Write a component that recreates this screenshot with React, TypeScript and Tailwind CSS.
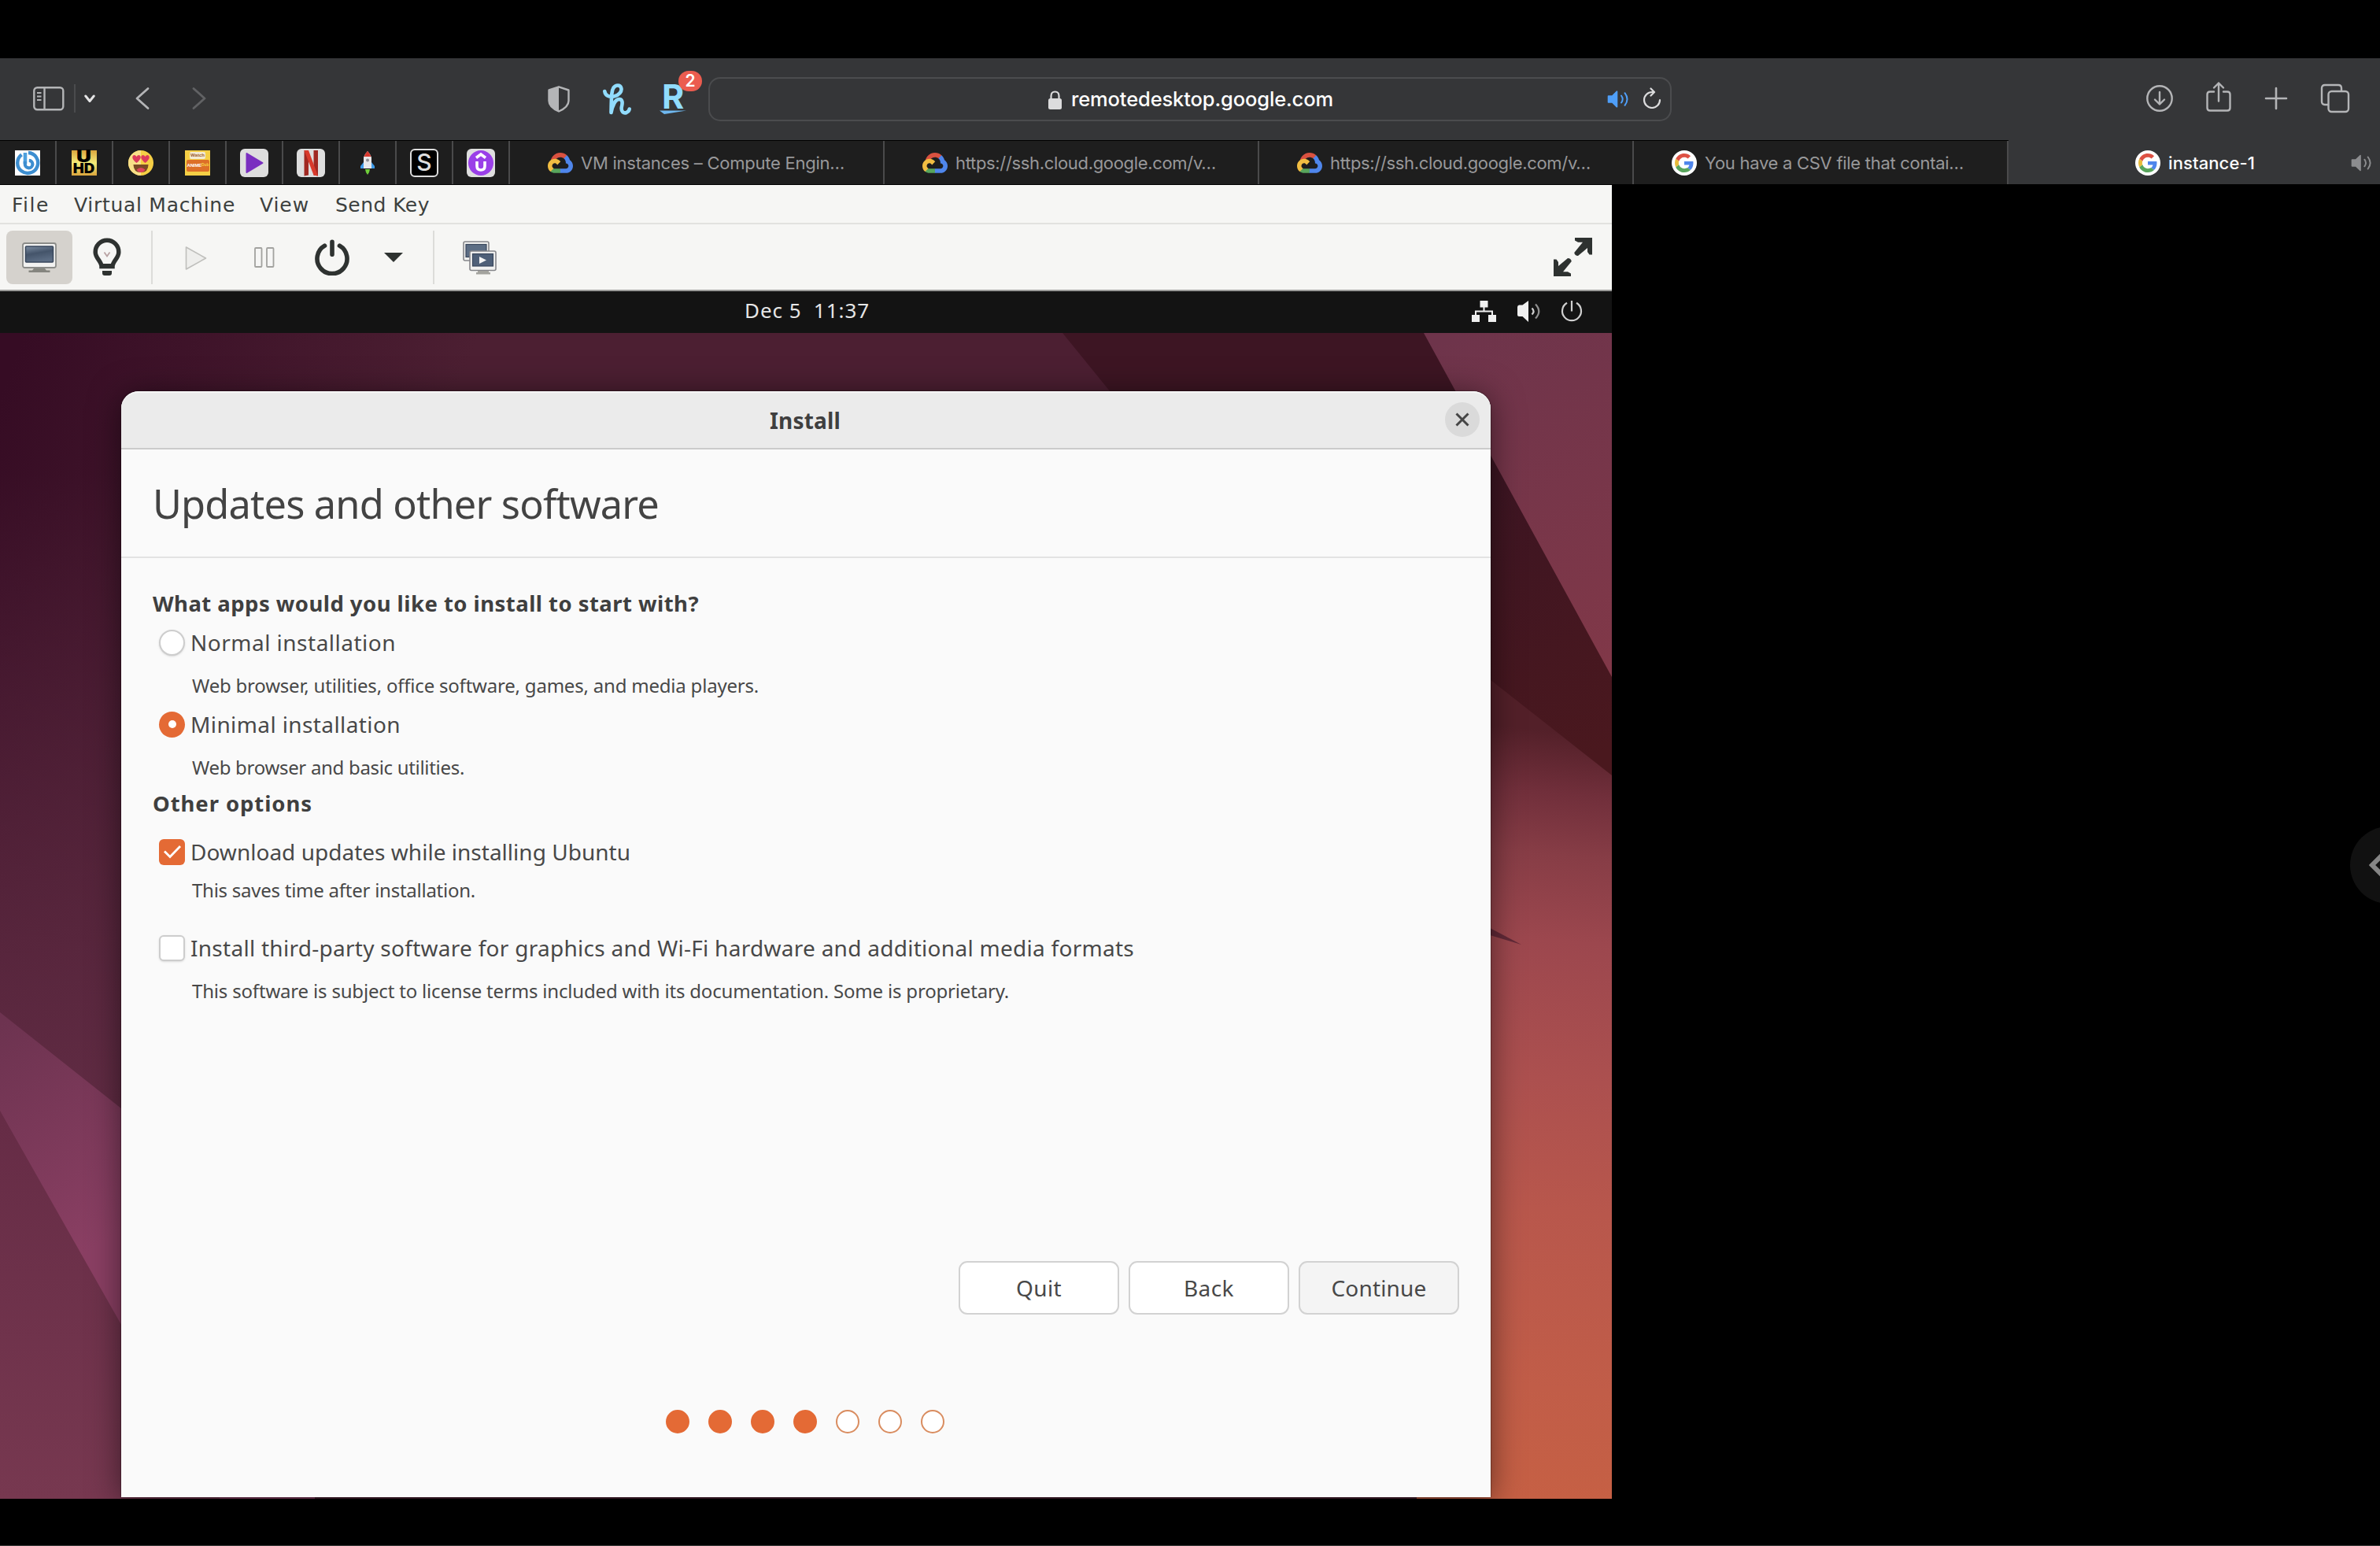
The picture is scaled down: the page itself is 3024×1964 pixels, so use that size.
import React, { useLayoutEffect, useRef, useState } from "react";

/* Single line of text whose tracking is adjusted so that it spans `w` pixels. */
function Fit({ w, children, className = "" }: { w: number; children: string; className?: string }) {
  const ref = useRef<HTMLSpanElement>(null);
  const [ls, setLs] = useState(0);
  useLayoutEffect(() => {
    if (ref.current) setLs((w - ref.current.getBoundingClientRect().width) / children.length);
  }, [w, children]);
  return (
    <span ref={ref} className={"inline-block whitespace-pre " + className} style={{ letterSpacing: ls }}>
      {children}
    </span>
  );
}

const GoogleG = ({ size }: { size: number }) => (
  <svg width={size} height={size} viewBox="0 0 48 48">
    <path fill="#e8bb3a" d="M10.53 28.59c-.48-1.45-.76-2.99-.76-4.59s.27-3.14.76-4.59l-7.98-6.19C.92 16.46 0 20.12 0 24c0 3.88.92 7.54 2.56 10.78l7.97-6.19z" />
    <path fill="#dd5144" d="M24 9.5c3.54 0 6.71 1.22 9.21 3.6l6.85-6.85C35.9 2.38 30.47 0 24 0 14.62 0 6.51 5.38 2.56 13.22l7.98 6.19C12.43 13.72 17.74 9.5 24 9.5z" />
    <path fill="#4f86ec" d="M46.98 24.55c0-1.57-.15-3.09-.38-4.55H24v9.02h12.94c-.58 2.96-2.26 5.48-4.78 7.18l7.73 6c4.51-4.18 7.09-10.36 7.09-17.65z" />
    <path fill="#58a55c" d="M24 48c6.48 0 11.93-2.13 15.89-5.81l-7.73-6c-2.15 1.45-4.92 2.3-8.16 2.3-6.26 0-11.57-4.22-13.47-9.91l-7.98 6.19C6.51 42.62 14.62 48 24 48z" />
  </svg>
);
const GoogleIcon = () => (
  <span className="flex size-8 shrink-0 items-center justify-center rounded-full bg-white">
    <GoogleG size={24} />
  </span>
);
const CloudIcon = () => (
  <svg className="shrink-0" width="32" height="26" viewBox="0 0 256 206">
    <path fill="#d95140" d="M170.25 56.82 192.5 34.57l1.48-9.37C153.44-11.68 88.98-7.5 52.42 33.92 42.27 45.42 34.73 59.76 30.72 74.57l7.97-1.12 44.5-7.34 3.44-3.51c19.8-21.74 53.27-24.67 76.13-6.17l7.5.39Z" />
    <path fill="#4f86ec" d="M224.2 73.92c-5.11-18.84-15.61-35.77-30.21-48.72l-31.23 31.23c13.19 10.77 20.7 27.01 20.38 44.04v5.54c15.35 0 27.8 12.45 27.8 27.8 0 15.35-12.45 27.48-27.8 27.48h-55.68l-5.46 5.93v33.34l5.46 5.23h55.68c39.93.31 72.55-31.49 72.86-71.42.19-24.21-11.75-46.9-31.8-60.45Z" />
    <path fill="#58a55c" d="M71.87 205.8h55.59v-44.51H71.87c-3.96 0-7.8-.85-11.4-2.5l-8 2.46-22.42 22.25-1.95 7.56c12.53 9.51 27.83 14.81 43.77 14.74Z" />
    <path fill="#f2be42" d="M71.87 61.43C31.94 61.66-.24 94.23 0 134.16c.13 22.3 10.55 43.29 28.1 56.9l32.37-32.27c-13.99-6.32-20.22-22.79-13.9-36.78 6.32-13.99 22.79-20.22 36.78-13.9 6.17 2.79 11.11 7.72 13.89 13.89l32.38-32.36C115.84 71.61 94.45 61.06 71.87 61.43Z" />
  </svg>
);

const Speaker = ({ className }: { className: string }) => (
  <svg className={className} viewBox="0 0 28 22" fill="none" stroke="currentColor" strokeLinecap="round" strokeWidth="2">
    <path d="M1.500 7h5L12.500 1.200V20.800L6.500 15h-5z" fill="currentColor" strokeWidth="1.600" strokeLinejoin="round" />
    <path d="M18 6.500q3.400 4.500 0 9M22.500 3.200q6 7.800 0 15.600" />
  </svg>
);

function BrowserToolbar() {
  return (
    <header className="flex h-[104px] items-center bg-[#353638] text-[#b4b5b7]">
      <div className="flex w-[696px] -translate-y-px items-center pl-[42px]">
        <svg width="40" height="31" viewBox="0 0 40 31" fill="none" stroke="currentColor" strokeWidth="2.400">
          <rect x="1.300" y="1.300" width="37" height="28" rx="4" />
          <path d="M14.500 1.500v28" />
          <path d="M5 8h5.500M5 12.500h5.500M5 17h5.500" strokeWidth="2" />
        </svg>
        <span className="ml-[12px] h-9 w-[2px] bg-[#4a4b4d]" />
        <svg className="ml-[11px]" width="14" height="11" viewBox="0 0 14 11" fill="none" stroke="#e4e4e5" strokeWidth="3" strokeLinecap="round" strokeLinejoin="round">
          <path d="M1.800 2 7 8.500 12.200 2" />
        </svg>
        <svg className="ml-[51px]" width="18" height="30" viewBox="0 0 18 30" fill="none" stroke="currentColor" strokeWidth="2.800" strokeLinecap="round" strokeLinejoin="round">
          <path d="M16 2.500 2 15 16 27.500" />
        </svg>
        <svg className="ml-[54px]" width="18" height="30" viewBox="0 0 18 30" fill="none" stroke="#616264" strokeWidth="2.800" strokeLinecap="round" strokeLinejoin="round">
          <path d="M2 2.500 16 15 2 27.500" />
        </svg>
      </div>
      <svg width="28" height="34" viewBox="0 0 28 34">
        <path d="M14 1.300 26.500 5.500V19q0 8-12.500 13.500Q1.500 27 1.500 19V5.500Z" fill="none" stroke="currentColor" strokeWidth="2.400" strokeLinejoin="round" />
        <path d="M14 1.300V32.500Q1.500 27 1.500 19V5.500Z" fill="currentColor" />
      </svg>
      <svg className="ml-[42px]" width="36" height="40" viewBox="0 0 36 40" fill="none" stroke="#91dcfd" strokeWidth="4.600" strokeLinecap="round" strokeLinejoin="round">
        <path d="M2.300 10C3 15.500 8 17.500 14 16.500 20.500 15 24.500 10 23.300 5.800 22 1.500 16.500 1.500 13.500 5.500 10.800 9.500 11 16 10.500 37 12 29 15.500 20.500 20.500 20 25.500 19.800 25 25.500 23.800 30 22.800 36 26.500 38.300 30 37 32.500 35.800 33.500 34 33.700 32.500" />
      </svg>
      <div className="relative ml-[35px] flex h-[40px] w-[36px] flex-col items-center">
        <span className="font-[Inter] text-[43px] leading-[32px] font-bold text-[#91dcfd]">R</span>
        <svg className="mt-[1px]" width="36" height="7" viewBox="0 0 36 7">
          <path d="M1 1.500H35L7 6Z" fill="#6fb8f0" />
        </svg>
        <span className="absolute -top-[16px] left-[25px] flex h-[26px] w-[30px] items-center justify-center rounded-full bg-[#eb5c4f] font-[Inter] text-[21px] font-semibold text-white">2</span>
      </div>
      <div className="ml-[27px] flex h-14 w-[1224px] items-center rounded-[15px] border-2 border-[#4b4c4e] pt-px pr-[11px] pl-[430px]">
        <svg width="17" height="24" viewBox="0 0 17 24">
          <rect x="0" y="10" width="17" height="14" rx="2.500" fill="#dcdcdd" />
          <path d="M3.500 11V7q0-5.500 5-5.500t5 5.500v4" fill="none" stroke="#dcdcdd" strokeWidth="2.200" />
        </svg>
        <div className="ml-[12px] w-[681px] font-[Inter] text-[25.500px] font-medium text-white">
          <Fit w={333}>remotedesktop.google.com</Fit>
        </div>
        <Speaker className="h-[22px] w-[28px] -translate-y-px text-[#4f9ff8]" />
        <svg className="ml-[17px] -translate-y-[2px]" width="24" height="27" viewBox="0 0 24 27" fill="none" stroke="#dcdcdd" strokeWidth="2.200" strokeLinecap="round" strokeLinejoin="round">
          <path d="M14.500 6H12A10 10 0 1 0 22 16M10.500 1.500 15 6l-4.500 4.500" />
        </svg>
      </div>
      <div className="ml-[602px] flex -translate-y-px items-center">
        <svg width="36" height="36" viewBox="0 0 36 36" fill="none" stroke="currentColor" strokeWidth="2.400" strokeLinecap="round" strokeLinejoin="round">
          <circle cx="18" cy="18" r="15.700" />
          <path d="M18 10v15M12 19.500l6 6 6-6" />
        </svg>
        <svg className="ml-[40px] -mt-[4px]" width="34" height="40" viewBox="0 0 34 40" fill="none" stroke="currentColor" strokeWidth="2.400" strokeLinecap="round" strokeLinejoin="round">
          <path d="M11 13.500H6q-3.500 0-3.500 3.500V34q0 3.500 3.500 3.500H28q3.500 0 3.500-3.500V17q0-3.500-3.500-3.500H23M17 25.500V2.500M11 8.500l6-6 6 6" />
        </svg>
        <svg className="ml-[41px]" width="30" height="30" viewBox="0 0 30 30" fill="none" stroke="currentColor" strokeWidth="2.600" strokeLinecap="round">
          <path d="M15 2v26M2 15h26" />
        </svg>
        <svg className="ml-[41px]" width="38" height="38" viewBox="0 0 38 38" fill="none" stroke="currentColor" strokeWidth="2.400" strokeLinejoin="round">
          <path d="M10.500 27H6q-4 0-4-4V6q0-4 4-4H23q4 0 4 4v4" />
          <rect x="10.500" y="10" width="25.500" height="26" rx="4" />
        </svg>
      </div>
    </header>
  );
}

const framed = "flex size-9 items-center justify-center overflow-hidden rounded-[6px] bg-[#dedede]";
const pinned: React.ReactNode[] = [
  <svg width="32" height="32" viewBox="0 0 32 32">
    <rect width="32" height="32" fill="#fff" />
    <path d="M8.500 5.500A13 13 0 1 0 17 3" fill="none" stroke="#3d8ed0" strokeWidth="4.400" />
    <path d="M13 3v14" stroke="#4ea0dd" strokeWidth="4.600" />
    <path d="M12.800 14v3.500a4.800 4.800 0 1 0 5-4.700" fill="none" stroke="#3d8ed0" strokeWidth="4.200" />
  </svg>,
  <span className="flex size-8 flex-col items-center bg-linear-to-b from-[#d9a53d] via-[#f4ec78] to-[#d9a53d] font-[Inter] font-black text-black">
    <span className="-mt-px block scale-x-125 text-[21px] leading-[17px]">U</span>
    <span className="block scale-x-110 text-[17px] leading-[15px]">HD</span>
  </span>,
  <svg width="32" height="32" viewBox="0 0 32 32">
    <circle cx="16" cy="16" r="16" fill="#f5ce45" />
    <path d="M16 0a16 16 0 0 0 0 32z" fill="#f8df88" />
    <path d="M6.500 18h19q0 10-9.500 10T6.500 18z" fill="#7a4a25" />
    <path d="M10.500 24.500q5.500-5 11 0-2 3.500-5.500 3.500t-5.500-3.500z" fill="#e0435c" />
    <path d="M10.500 16Q4 11 5.500 7.500 8 4.500 10.500 8q2.500-3.500 5-.5Q17 11 10.500 16zM21.500 16Q15 11 16.500 7.500q2.500-3 5 .5 2.500-3.500 5-.5Q28 11 21.500 16z" fill="#dd3a5c" />
  </svg>,
  <span className="flex size-8 flex-col items-center bg-[#f5cf45] pt-[2px] font-['Liberation_Sans'] font-bold">
    <span className="rounded-[2px] bg-[#f3ead2] px-px text-[6px] leading-[9px] text-[#9c5a2a]">Watch</span>
    <span className="mt-px flex h-[15px] w-[29px] items-center rounded-[2px] bg-[#dd6f28] pl-px text-[6px] tracking-tight text-white">
      ANIME<span className="text-[5px] text-[#f5cf45]">Dub</span>
    </span>
  </span>,
  <span className={framed}>
    <svg width="36" height="36" viewBox="0 0 36 36">
      <path d="M8.500 6v24L28.500 18z" fill="#7a2fc0" stroke="#7a2fc0" strokeWidth="2" strokeLinejoin="round" />
    </svg>
  </span>,
  <span className={framed}>
    <svg width="36" height="36" viewBox="0 0 36 36">
      <path d="M9.500 2h5.500v31.500l-5.500 1zM21.500 2H27v32.500l-5.500-1z" fill="#a02822" />
      <path d="M9.500 2H15l12 32.500-5.500-1z" fill="#d83a2c" />
    </svg>
  </span>,
  <svg width="20" height="32" viewBox="0 0 20 32">
    <path d="M1 20l4-5v8H1zM19 20l-4-5v8h4z" fill="#3f9be8" />
    <path d="M5 9Q7 4 10 1q3 3 5 8v14H5z" fill="#e8e8ea" />
    <path d="M5.500 8Q7 4 10 1q3 3 4.500 7z" fill="#d8382e" />
    <circle cx="10" cy="12.500" r="2" fill="#8f8f94" />
    <path d="M7 24h6l-1 4-2 3-2-3z" fill="#6fce3a" />
  </svg>,
  <span className="flex size-9 items-center justify-center rounded-[6px] border-2 border-[#dedede] bg-black font-[Inter] text-[30px] font-medium text-[#dedede]">S</span>,
  <span className={framed}>
    <svg width="36" height="36" viewBox="0 0 36 36">
      <circle cx="18" cy="18" r="16" fill="#9a3fe8" />
      <path d="M13 16v6q0 5 5 5t5-5v-6M12 11.500 18 7l6 4.500" fill="none" stroke="#fff" strokeWidth="3.600" />
    </svg>
  </span>,
];

const tabs = [
  { icon: <CloudIcon />, label: "VM instances – Compute Engin…", w: 335 },
  { icon: <CloudIcon />, label: "https://ssh.cloud.google.com/v…", w: 331 },
  { icon: <CloudIcon />, label: "https://ssh.cloud.google.com/v…", w: 331 },
  { icon: <GoogleIcon />, label: "You have a CSV file that contai…", w: 329 },
];

function TabBar() {
  return (
    <nav className="flex h-[55px] bg-[#1e1e1e] font-[Inter] text-[22px] text-[#98989a]">
      {pinned.map((icon, i) => (
        <div key={i} className="flex w-[72px] items-center justify-center border-r-2 border-[#4a4a4b]">{icon}</div>
      ))}
      {tabs.map((t, i) => (
        <div key={i} className="flex w-[476px] items-center gap-[10px] border-r-2 border-[#4a4a4b] pl-[48px]">
          {t.icon}
          <span className="translate-y-px"><Fit w={t.w}>{t.label}</Fit></span>
        </div>
      ))}
      <div className="-mt-px flex grow items-center bg-[#353638] pt-px pl-[161px] font-medium text-white">
        <GoogleIcon />
        <div className="ml-[10px] w-[232px] translate-y-px">
          <Fit w={110}>instance-1</Fit>
        </div>
        <Speaker className="h-[22px] w-[27px] text-[#8c8d8f]" />
      </div>
    </nav>
  );
}

const Monitor = () => (
  <svg width="44" height="40" viewBox="0 0 44 40">
    <defs>
      <linearGradient id="scr" x1="0" y1="0" x2="0.300" y2="1">
        <stop offset="0" stopColor="#7d8ea3" />
        <stop offset="0.500" stopColor="#44546a" />
        <stop offset="1" stopColor="#5c6d84" />
      </linearGradient>
    </defs>
    <rect x="1" y="1" width="42" height="31" rx="2.500" fill="#f2f2f1" stroke="#8b8c89" strokeWidth="1.800" />
    <rect x="4.500" y="5" width="35" height="20" rx="1" fill="url(#scr)" stroke="#39475c" strokeWidth="1.500" />
    <path d="M15 33h14l2 2.500h4.500V38h-27v-2.500H13z" fill="#85857f" />
  </svg>
);

const DualMonitor = () => (
  <svg width="43" height="43" viewBox="0 0 43 43">
    <rect x="1" y="1" width="32" height="24" rx="2" fill="#f2f2f1" stroke="#85868a" strokeWidth="1.600" />
    <rect x="4" y="4.500" width="26" height="16" fill="#5c6d84" stroke="#39475c" strokeWidth="1.200" />
    <rect x="9" y="13" width="33" height="24.500" rx="2" fill="#f2f2f1" stroke="#85868a" strokeWidth="1.600" />
    <rect x="12.500" y="16.500" width="26" height="15.500" fill="#4f6078" stroke="#39475c" strokeWidth="1.200" />
    <path d="M21 20v9l9-4.500z" fill="#f4f4f4" />
    <path d="M19 38h14v2h2v2.500H17V40h2z" fill="#a3a39e" />
  </svg>
);

function VirtManager() {
  return (
    <div className="bg-[#f6f6f4] text-[#2e3230]">
      <div className="flex h-[50px] items-center border-b-2 border-[#e2e2df] pt-[3px] pl-[15px] font-['DejaVu_Sans'] text-[25px] text-[#3c403e]">
        <Fit w={48}>File</Fit>
        <div className="ml-[31px]"><Fit w={205}>Virtual Machine</Fit></div>
        <div className="ml-[31px]"><Fit w={63}>View</Fit></div>
        <div className="ml-[33px]"><Fit w={120}>Send Key</Fit></div>
      </div>
      <div className="flex h-[85px] items-center border-b-2 border-[#9b9b99] pl-2">
        <span className="flex h-[68px] w-[84px] items-center justify-center rounded-lg bg-[#d5d2cd] pt-[3px]"><Monitor /></span>
        <svg className="ml-[26px]" width="36" height="49" viewBox="0 0 36 49">
          <path d="M18 3.200A14.800 15 0 0 0 3.200 18.500C3.200 26 11 30 11 36.500H25C25 30 32.800 26 32.800 18.500A14.800 15 0 0 0 18 3.200Z" fill="none" stroke="currentColor" strokeWidth="5.500" />
          <path d="M10 33h16v6H10zM12 42h12v3q0 3-3 3h-6q-3 0-3-3z" fill="currentColor" />
          <path d="M14.500 18.500l3.500 5 3.500-5" fill="none" stroke="#b9a3a3" strokeWidth="1.800" />
        </svg>
        <span className="ml-[38px] h-[68px] w-[2px] bg-[#dcdcd9]" />
        <svg className="ml-[41px] mt-[2px]" width="28" height="32" viewBox="0 0 28 32">
          <path d="M1.500 2v28L26.500 16z" fill="#eeeeec" stroke="#bfbfbc" strokeWidth="1.600" strokeLinejoin="round" />
        </svg>
        <svg className="ml-[60px]" width="26" height="26" viewBox="0 0 26 26" fill="#f6f6f5" stroke="#a2a29f" strokeWidth="1.800">
          <rect x="1" y="1" width="8.500" height="24" rx="1" />
          <rect x="16" y="1" width="8.500" height="24" rx="1" />
        </svg>
        <svg className="ml-[51px]" width="44" height="46" viewBox="0 0 44 46" fill="none" stroke="currentColor" strokeWidth="5.600" strokeLinecap="round">
          <path d="M12.500 8.200A19 19 0 1 0 31.500 8.200M22 3.200v16" />
        </svg>
        <svg className="ml-[44px]" width="24" height="12" viewBox="0 0 24 12"><path d="M0 0h24L12 12z" fill="currentColor" /></svg>
        <span className="ml-[38px] h-[68px] w-[2px] bg-[#dcdcd9]" />
        <div className="ml-[36px] w-[1386px] pt-[2px]"><DualMonitor /></div>
        <svg width="49" height="49" viewBox="0 0 49 49" fill="currentColor">
          <path d="M27 0H49V21.500H45.500L43 18V13L31 23Q27 23 26.200 19L37 5.800H31L27 3.500zM22 49H0V27.500H3.500L6 31V36L18 26Q22 26 22.800 30L12 43.200H18L22 45.500z" />
        </svg>
      </div>
    </div>
  );
}

function Wallpaper() {
  return (
    <svg className="absolute inset-0" width="2048" height="1481" viewBox="0 423 2048 1481" preserveAspectRatio="none">
      <defs>
        <linearGradient id="base" gradientUnits="userSpaceOnUse" x1="0" y1="500" x2="500" y2="700">
          <stop offset="0" stopColor="#360c24" />
          <stop offset="1" stopColor="#4c1f32" />
        </linearGradient>
        <linearGradient id="leftDown" gradientUnits="userSpaceOnUse" x1="0" y1="600" x2="0" y2="1400">
          <stop offset="0" stopColor="#5b2940" stopOpacity="0" />
          <stop offset="1" stopColor="#602b43" />
        </linearGradient>
        <linearGradient id="facet1" gradientUnits="userSpaceOnUse" x1="0" y1="1300" x2="160" y2="1560">
          <stop offset="0" stopColor="#6d3350" />
          <stop offset="1" stopColor="#8a3f63" />
        </linearGradient>
        <linearGradient id="facet2" gradientUnits="userSpaceOnUse" x1="0" y1="1420" x2="0" y2="1904">
          <stop offset="0" stopColor="#662c46" />
          <stop offset="1" stopColor="#773850" />
        </linearGradient>
        <linearGradient id="topRight" gradientUnits="userSpaceOnUse" x1="1850" y1="423" x2="2048" y2="860">
          <stop offset="0" stopColor="#6e344b" />
          <stop offset="1" stopColor="#813848" />
        </linearGradient>
        <linearGradient id="shade" gradientUnits="userSpaceOnUse" x1="1880" y1="600" x2="2048" y2="950">
          <stop offset="0" stopColor="#3d1523" />
          <stop offset="1" stopColor="#4a181e" />
        </linearGradient>
        <linearGradient id="glow" gradientUnits="userSpaceOnUse" x1="1990" y1="930" x2="1900" y2="1904">
          <stop offset="0" stopColor="#532029" />
          <stop offset="0.080" stopColor="#712f3b" />
          <stop offset="0.160" stopColor="#873d46" />
          <stop offset="0.270" stopColor="#9c474e" />
          <stop offset="0.450" stopColor="#ac504f" />
          <stop offset="0.620" stopColor="#b8574c" />
          <stop offset="0.850" stopColor="#c15d48" />
          <stop offset="1" stopColor="#c66044" />
        </linearGradient>
      </defs>
      <rect y="423" width="2048" height="1481" fill="url(#base)" />
      <rect y="423" width="400" height="1481" fill="url(#leftDown)" />
      <path d="M0 1286 400 1603V1904H0z" fill="url(#facet1)" />
      <path d="M0 1411 280 1905H0z" fill="url(#facet2)" />
      <path d="M1350 423H1810L2048 858V1100H1900z" fill="url(#shade)" />
      <path d="M1809 423H2048V860z" fill="url(#topRight)" />
      <path d="M1800 790 2048 985V1904H1800z" fill="url(#glow)" />
      <path d="M1880 1172 1933 1200 1880 1184z" fill="#632a38" />
    </svg>
  );
}

function Desktop() {
  return (
    <div>
      <div className="flex h-[53px] items-center bg-[#131313] pl-[946px] font-['Noto_Sans'] text-[26px] text-[#e6e6e6]">
        <div className="w-[924px] -translate-y-[2px]"><Fit w={159}>Dec 5  11:37</Fit></div>
        <svg className="-translate-y-px" width="31" height="27" viewBox="0 0 31 27" fill="#f0f0f0">
          <path d="M10.500 0h10v8.500h-10zM0 18h10v9H0zM21 18h10v9H21z" />
          <path d="M15.500 8v6M5 19v-5.500h21V19" fill="none" stroke="#f0f0f0" strokeWidth="2" />
        </svg>
        <svg className="ml-[27px] -translate-y-px" width="30" height="29" viewBox="0 0 30 29" fill="#f0f0f0">
          <path d="M0 9q0-2 2-2.500h4.500L14 1v27l-7.500-7H2q-2 0-2-2z" />
          <path d="M18.500 10.500q4 4 0 8" fill="none" stroke="#cfcfcf" strokeWidth="2.200" />
          <path d="M23 5.500q8.500 9 0 18" fill="none" stroke="#8f8f8f" strokeWidth="2.200" />
        </svg>
        <svg className="ml-[25px] -translate-y-[2px]" width="28" height="28" viewBox="0 0 28 28" fill="none" stroke="#cfcfcf" strokeWidth="2.200">
          <path d="M8 3.800A12 12 0 1 0 20 3.800M14 1v13.500" />
        </svg>
      </div>
      <div className="relative h-[1481px] overflow-hidden">
        <Wallpaper />
        <div className="relative ml-[154px] pt-[74px]"><InstallDialog /></div>
      </div>
    </div>
  );
}

const Check = ({ on }: { on: boolean }) =>
  on ? (
    <span className="flex size-[33px] items-center justify-center rounded-[6px] bg-[#e46a35]">
      <svg width="24" height="18" viewBox="0 0 24 18" fill="none" stroke="#fff" strokeWidth="2.800"><path d="M2 8.500 9 15.500 22 2" /></svg>
    </span>
  ) : (
    <span className="size-[33px] rounded-[6px] border-2 border-[#cdcdcd] bg-white shadow-sm" />
  );
const Radio = ({ on }: { on: boolean }) =>
  on ? (
    <span className="flex size-[33px] items-center justify-center rounded-full bg-[#e46a35]"><span className="size-[10px] rounded-full bg-white" /></span>
  ) : (
    <span className="size-[33px] rounded-full border-2 border-[#cdcdcd] bg-white shadow-sm" />
  );

const Row = ({ mt, children }: { mt: string; children: React.ReactNode }) => (
  <div className={"flex h-10 items-center " + mt}>{children}</div>
);

function InstallDialog() {
  const heading = "ml-[40px] text-[27.500px] font-bold text-[#3f3f3f]";
  const label = "ml-[7px] text-[28px] text-[#484848]";
  const note = "ml-[90px] text-[24px] text-[#484848]";
  return (
    <section className="flex h-[1405px] w-[1740px] flex-col rounded-t-[22px] bg-[#fafafa] font-['Noto_Sans'] shadow-[0_4px_40px_rgba(0,0,0,0.5),0_0_2px_rgba(0,0,0,0.8)]">
      <div className="flex h-[74px] items-center rounded-t-[22px] border-t-2 border-b-2 border-t-[#f6f6f6] border-b-[#cbcbcb] bg-[#ebebeb] pr-[14px]">
        <div className="ml-[824px] w-[858px] text-[28px] font-bold text-[#3f3f3f]"><Fit w={90}>Install</Fit></div>
        <span className="flex size-11 -translate-y-px items-center justify-center rounded-full bg-[#dadada]">
          <svg width="18" height="18" viewBox="0 0 18 18" stroke="#454545" strokeWidth="3"><path d="M1.500 1.500l15 15M16.500 1.500l-15 15" /></svg>
        </span>
      </div>
      <div className="flex h-[138px] items-center border-b-2 border-[#e3e3e3] pt-[2px] pl-[40px] text-[50.500px] leading-none text-[#434343]">
        <Fit w={643}>Updates and other software</Fit>
      </div>
      <Row mt="mt-[38px]"><div className={heading}><Fit w={694}>What apps would you like to install to start with?</Fit></div></Row>
      <Row mt="mt-[9px]"><span className="ml-[48px] flex"><Radio on={false} /></span><div className={label}><Fit w={261}>Normal installation</Fit></div></Row>
      <Row mt="mt-[15px]"><div className={note}><Fit w={720}>Web browser, utilities, office software, games, and media players.</Fit></div></Row>
      <Row mt="mt-[9px]"><span className="ml-[48px] flex"><Radio on /></span><div className={label}><Fit w={267}>Minimal installation</Fit></div></Row>
      <Row mt="mt-[15px]"><div className={note}><Fit w={346}>Web browser and basic utilities.</Fit></div></Row>
      <Row mt="mt-[6px]"><div className={heading}><Fit w={203}>Other options</Fit></div></Row>
      <Row mt="mt-[21px]"><span className="ml-[48px] flex"><Check on /></span><div className={label}><Fit w={559}>Download updates while installing Ubuntu</Fit></div></Row>
      <Row mt="mt-[9px]"><div className={note}><Fit w={360}>This saves time after installation.</Fit></div></Row>
      <Row mt="mt-[33px]"><span className="ml-[48px] flex"><Check on={false} /></span><div className={label}><Fit w={1199}>Install third-party software for graphics and Wi-Fi hardware and additional media formats</Fit></div></Row>
      <Row mt="mt-[15px]"><div className={note}><Fit w={1038}>This software is subject to license terms included with its documentation. Some is proprietary.</Fit></div></Row>
      <div className="mt-[323px] flex justify-end gap-3 pr-[40px] text-[28px] text-[#484848]">
        <button className="h-[68px] w-[204px] rounded-[11px] border-2 border-[#d2d2d2] bg-white"><Fit w={58}>Quit</Fit></button>
        <button className="h-[68px] w-[204px] rounded-[11px] border-2 border-[#d2d2d2] bg-white"><Fit w={64}>Back</Fit></button>
        <button className="h-[68px] w-[204px] rounded-[11px] border-2 border-[#d2d2d2] bg-[#f4f4f4]"><Fit w={121}>Continue</Fit></button>
      </div>
      <div className="mt-[121px] flex gap-6 pl-[692px]">
        {[1, 1, 1, 1, 0, 0, 0].map((on, i) => (
          <span key={i} className={"size-[30px] rounded-full border-2 " + (on ? "border-[#e46a35] bg-[#e46a35]" : "border-[#d98c5f] bg-white")} />
        ))}
      </div>
    </section>
  );
}

export default function App() {
  return (
    <div className="relative h-[1964px] w-[3024px] overflow-hidden border-b border-[#3a3a3a] bg-black pt-[74px]">
      <BrowserToolbar />
      <div className="h-px bg-black" />
      <TabBar />
      <main className="mt-px flex h-[1669px] w-[2048px] flex-col">
        <VirtManager />
        <Desktop />
      </main>
      <div className="absolute top-[1050px] left-[2986px] flex size-[98px] items-center rounded-full bg-[#111111] pl-[24px]">
        <svg width="24" height="36" viewBox="0 0 24 36" fill="none" stroke="#858585" strokeWidth="6"><path d="M21 1 4 18l17 17" /></svg>
      </div>
    </div>
  );
}
